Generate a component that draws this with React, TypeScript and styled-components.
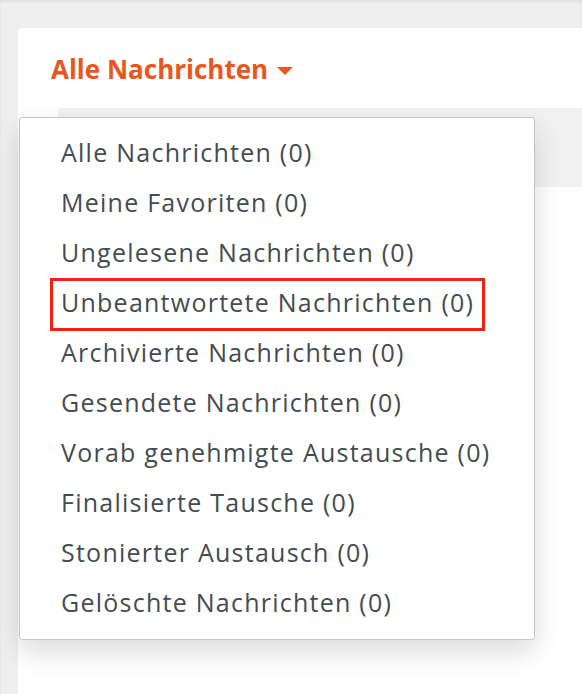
import React from 'react';
import styled, { createGlobalStyle } from 'styled-components';

const GlobalStyle = createGlobalStyle`
  html, body {
    margin: 0;
    padding: 0;
    background: #efefef;
  }

  body {
    font-family: 'Open Sans', sans-serif;
  }
`;

const Page = styled.div`
  min-height: 694px;
  padding: 28px 0 0 18px;
  box-sizing: border-box;
  box-shadow: inset 0 2px 3px rgba(0, 0, 0, 0.07);
  overflow: hidden;
`;

const Card = styled.section`
  background: #fff;
  border-top-left-radius: 4px;
  min-height: 666px;
  padding-top: 25px;
`;

const Header = styled.div`
  position: relative;
  padding-left: 33px;
`;

const TitleButton = styled.button`
  display: inline-flex;
  align-items: center;
  gap: 9px;
  padding: 0;
  border: 0;
  background: none;
  color: #e9561e;
  font-family: 'Open Sans', sans-serif;
  font-size: 26px;
  font-weight: 700;
  line-height: 32px;
  cursor: pointer;

  svg {
    margin-top: 3px;
  }
`;

const Toolbar = styled.div`
  margin: 23px 0 0 40px;
  height: 79px;
  background: #f1f1f1;
  border-top-left-radius: 3px;
`;

const Menu = styled.ul`
  position: absolute;
  top: 64px;
  left: 1px;
  width: 516px;
  margin: 0;
  padding: 11px 0 10px;
  list-style: none;
  box-sizing: border-box;
  background: #fff;
  border: 1px solid #c6c6c6;
  border-radius: 3px;
  box-shadow: 0 12px 28px rgba(0, 0, 0, 0.14);
  z-index: 2;
`;

const Item = styled.li`
  padding-left: 41px;
  height: 50px;
  display: flex;
  align-items: center;
`;

const Label = styled.span<{ $boxed?: boolean }>`
  display: inline-block;
  padding: 0 8px 4px;
  margin: 0 -8px;
  line-height: 43px;
  color: #434c51;
  font-size: 25px;
  font-weight: 400;
  letter-spacing: 1.25px;
  white-space: nowrap;
  outline: ${({ $boxed }) => ($boxed ? '3px solid #f1230f' : 'none')};
`;

const Caret = () => (
  <svg width="16" height="8" viewBox="0 0 16 8" aria-hidden="true">
    <path d="M0 0 H16 L8 8 Z" fill="#e9561e" />
  </svg>
);

const items = [
  'Alle Nachrichten',
  'Meine Favoriten',
  'Ungelesene Nachrichten',
  'Unbeantwortete Nachrichten',
  'Archivierte Nachrichten',
  'Gesendete Nachrichten',
  'Vorab genehmigte Austausche',
  'Finalisierte Tausche',
  'Stonierter Austausch',
  'Gelöschte Nachrichten',
];

export default function App() {
  return (
    <>
      <GlobalStyle />
      <Page>
        <Card>
          <Header>
            <TitleButton>
              Alle Nachrichten
              <Caret />
            </TitleButton>
            <Menu>
              {items.map((label, i) => (
                <Item key={label}>
                  <Label $boxed={i === 3}>{label} (0)</Label>
                </Item>
              ))}
            </Menu>
          </Header>
          <Toolbar />
        </Card>
      </Page>
    </>
  );
}
